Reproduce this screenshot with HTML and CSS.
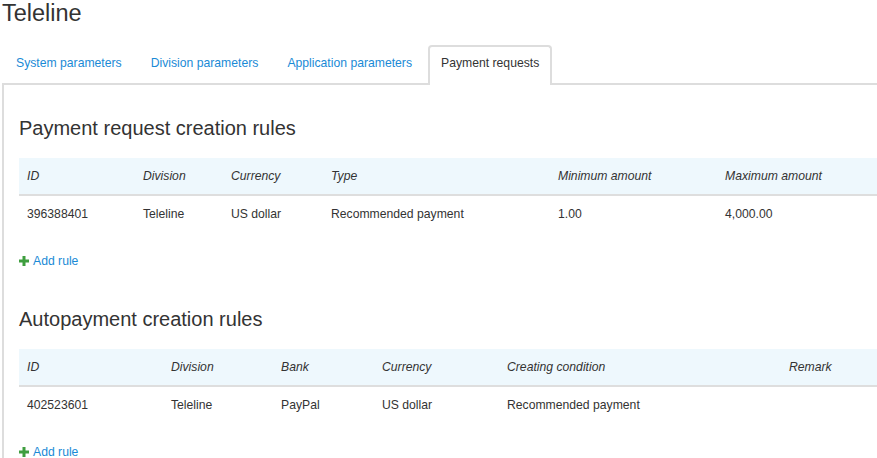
FILE: index.html
```html
<!DOCTYPE html>
<html>
<head lang="en">
    <meta charset="UTF-8">
    <title>Teleline</title>
    <link rel="stylesheet" href="styles.css">
</head>
<body>
<div class="page">
    <h1 class="title">Teleline</h1>
    <div class="tabs">
        <a class="tab" href="#">System parameters</a>
        <a class="tab" href="#">Division parameters</a>
        <a class="tab" href="#">Application parameters</a>
        <a class="tab active" href="#">Payment requests</a>
    </div>
    <div class="panel">
        <div class="section">
            <h2 class="section_title">Payment request creation rules</h2>
            <table class="rules">
                <colgroup>
                    <col style="width:116px"><col style="width:88px"><col style="width:100px">
                    <col style="width:227px"><col style="width:167px"><col>
                </colgroup>
                <thead>
                <tr><th>ID</th><th>Division</th><th>Currency</th><th>Type</th><th>Minimum amount</th><th>Maximum amount</th></tr>
                </thead>
                <tbody>
                <tr><td>396388401</td><td>Teleline</td><td>US dollar</td><td>Recommended payment</td><td>1.00</td><td>4,000.00</td></tr>
                </tbody>
            </table>
            <a class="add" href="#"><svg class="plus" width="10" height="10" viewBox="0 0 10 10"><rect x="3.5" y="0" width="3" height="10"/><rect x="0" y="3.5" width="10" height="3"/></svg>Add rule</a>
        </div>
        <div class="section">
            <h2 class="section_title">Autopayment creation rules</h2>
            <table class="rules">
                <colgroup>
                    <col style="width:144px"><col style="width:110px"><col style="width:101px">
                    <col style="width:125px"><col style="width:282px"><col>
                </colgroup>
                <thead>
                <tr><th>ID</th><th>Division</th><th>Bank</th><th>Currency</th><th>Creating condition</th><th>Remark</th></tr>
                </thead>
                <tbody>
                <tr><td>402523601</td><td>Teleline</td><td>PayPal</td><td>US dollar</td><td>Recommended payment</td><td></td></tr>
                </tbody>
            </table>
            <a class="add" href="#"><svg class="plus" width="10" height="10" viewBox="0 0 10 10"><rect x="3.5" y="0" width="3" height="10"/><rect x="0" y="3.5" width="10" height="3"/></svg>Add rule</a>
        </div>
    </div>
</div>
</body>
</html>
```

FILE: styles.css
```css
* {
    margin: 0;
    padding: 0;
    box-sizing: border-box;
}

body {
    font-family: "Liberation Sans", Arial, sans-serif;
    font-size: 12.2px;
    color: #333;
    background: #fff;
    overflow: hidden;
}

.page {
    padding-left: 2px;
}

.title {
    font-size: 23.5px;
    font-weight: normal;
    line-height: 26px;
    color: #333;
}

/* tabs */
.tabs {
    display: flex;
    margin-top: 19px;
    border-bottom: 2px solid #ddd;
}

.tab {
    display: block;
    height: 38px;
    padding: 0 13px 3px 12px;
    line-height: 33px;
    border: 2px solid transparent;
    border-bottom: none;
    border-radius: 4px 4px 0 0;
    color: #1a8ad6;
    text-decoration: none;
    white-space: nowrap;
}

.tab.active {
    height: 40px;
    margin-left: 1px;
    margin-bottom: -2px;
    padding: 0 11px 3px;
    border-color: #ddd;
    background: #fff;
    color: #333;
}

/* panel */
.panel {
    border-left: 2px solid #ddd;
    padding: 31px 0 0 15px;
}

.section_title {
    font-size: 20px;
    font-weight: normal;
    line-height: 24px;
    color: #333;
}

.rules {
    width: 100%;
    margin-top: 18px;
    border-collapse: collapse;
    table-layout: fixed;
}

.rules th {
    height: 37px;
    padding: 0 8px;
    text-align: left;
    font-weight: normal;
    font-style: italic;
    background: #eef8fd;
    border-bottom: 2px solid #dedede;
}

.rules td {
    height: 36px;
    padding: 0 8px;
    text-align: left;
}

.add {
    display: flex;
    align-items: center;
    margin-top: 22px;
    line-height: 16px;
    color: #1a8ad6;
    text-decoration: none;
}

.plus {
    margin-right: 4px;
    fill: #3f9e3f;
}

.section + .section {
    margin-top: 38px;
}
```
